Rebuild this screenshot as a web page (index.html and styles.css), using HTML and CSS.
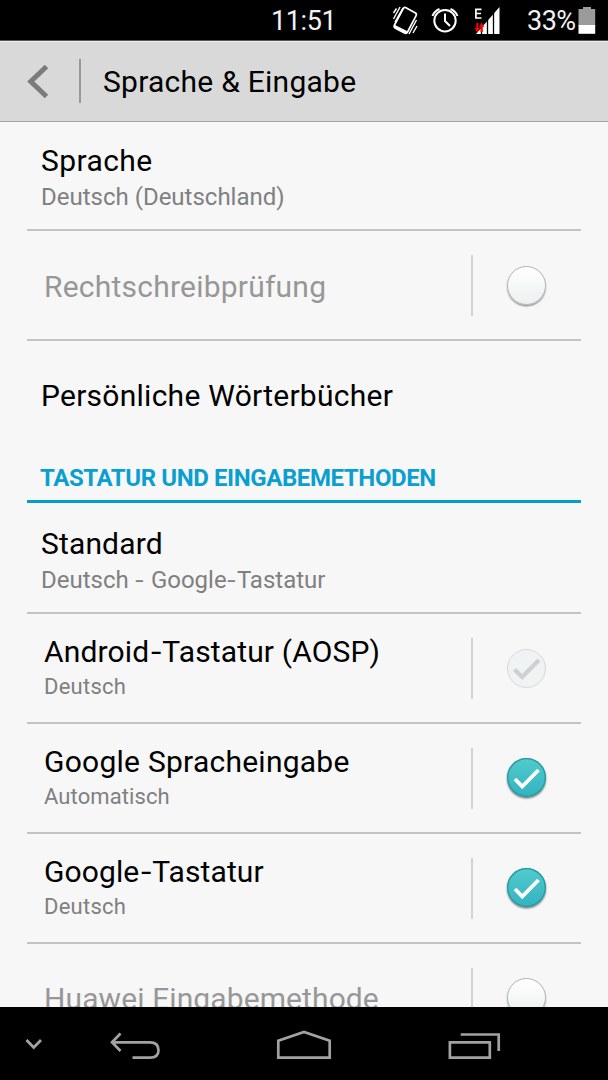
FILE: index.html
```
<!DOCTYPE html>
<html lang="de">
<head>
<meta charset="utf-8">
<title>Sprache &amp; Eingabe</title>
<link rel="stylesheet" href="styles.css">
</head>
<body>
<div class="screen">
  <div class="status">
    <span class="clock">11:51</span>
    <svg class="status-icons" width="112" height="41" viewBox="0 0 112 41">
      <g fill="none" stroke="#fff" stroke-width="1.7">
        <path d="M14.500 7.500L24.500 13Q26 14 25 15.800L16.500 32Q15.500 34 13.500 33L4 28Q2.500 27 3.500 25L12 9Q13 7 14.500 7.500Z"/>
        <path d="M2.500 13L5.500 8.500M2.500 19L9 7M4 22L12 8" stroke-width="1.400"/>
        <path d="M25.500 20L18 34M26 26L22 33" stroke-width="1.400"/>
      </g>
      <path d="M4 25L17 31.500L15.500 34L3 27.500Z" fill="#fff"/>
      <g fill="none" stroke="#fff" stroke-width="2">
        <circle cx="54" cy="20.700" r="10.700"/>
        <path d="M54 13.500V21L59 26"/>
        <path d="M41.500 16Q43.500 11 48.500 9M59.500 9Q64.500 11 66.500 16"/>
      </g>
      <path d="M85 9.300H90.500M85 13.500H90M85 18H90.500M84.900 8.500V18.800" stroke="#fff" stroke-width="1.700" fill="none"/>
      <path d="M85 34L108.500 7V34Z" fill="#fff"/>
      <path d="M90.500 23V34M96.500 17V34M102.500 11V34" stroke="#000" stroke-width="1.300"/>
      <path d="M85.300 23H87.500V28H89L86.300 32.500L83.500 28H85.300ZM88 27L90.500 22.500L93.300 27H91.800V32H89.500V27Z" fill="#f00"/>
    </svg>
    <span class="percent">33%</span>
    <svg class="battery" width="18" height="41" viewBox="0 0 18 41">
      <path d="M.5 9H5V7H13V9H17.200V26H.5Z" fill="#9b9b9b"/>
      <path d="M.5 25H17.200V33.800H.5Z" fill="#fff"/>
    </svg>
  </div>

  <div class="header">
    <svg class="back" width="24" height="38" viewBox="0 0 24 38"><path d="M20.500 3.500L4.800 18.500L20.500 33.500" fill="none" stroke="#7b7b7b" stroke-width="5"/></svg>
    <span class="header-line"></span>
    <h1 class="heading">Sprache &amp; Eingabe</h1>
  </div>

  <div class="list">
    <div class="row plain"><div class="texts"><div class="title t-sprache">Sprache</div><div class="sub">Deutsch (Deutschland)</div></div></div>
    <div class="row single"><div class="texts"><div class="title disabled t-recht">Rechtschreibprüfung</div></div><div class="control"><span class="check empty"></span></div></div>
    <div class="row personal"><div class="title t-pers">Persönliche Wörterbücher</div></div>
    <div class="section"><span class="section-text">TASTATUR UND EINGABEMETHODEN</span></div>
    <div class="row standard"><div class="texts"><div class="title t-std">Standard</div><div class="sub">Deutsch <span class="hyphen">-</span> Google<span class="hyphen">-</span>Tastatur</div></div></div>
    <div class="row method"><div class="texts"><div class="title t-aosp">Android<span class="hyphen">-</span>Tastatur (AOSP)</div><div class="sub small">Deutsch</div></div><div class="control"><span class="check locked"><svg width="39" height="39" viewBox="0 0 39 39"><path d="M7.500 20.500L15.200 28L32 11" fill="none" stroke="#d0d0d0" stroke-width="4.400"/></svg></span></div></div>
    <div class="row method"><div class="texts"><div class="title t-voice">Google Spracheingabe</div><div class="sub small auto">Automatisch</div></div><div class="control"><span class="check on"><svg width="39" height="39" viewBox="0 0 39 39"><path d="M8 21L15.200 28.500L31.500 12" fill="none" stroke="#fff" stroke-width="3.800"/></svg></span></div></div>
    <div class="row method"><div class="texts"><div class="title t-gkey">Google<span class="hyphen">-</span>Tastatur</div><div class="sub small">Deutsch</div></div><div class="control"><span class="check on"><svg width="39" height="39" viewBox="0 0 39 39"><path d="M8 21L15.200 28.500L31.500 12" fill="none" stroke="#fff" stroke-width="3.800"/></svg></span></div></div>
    <div class="row method last"><div class="texts"><div class="title disabled t-huawei">Huawei Eingabemethode</div></div><div class="control"><span class="check empty"></span></div></div>
  </div>

  <svg class="nav" width="608" height="73" viewBox="0 0 608 73">
    <g fill="none" stroke="#a2a2a2" stroke-width="2.700">
      <path d="M26.500 33L33.700 40.500L41 33" stroke-width="2.800"/>
      <path d="M120.500 26.500L112 35.300L120.500 44M112 35.300H150Q158.500 35.300 158.500 43.300Q158.500 50.700 150 50.700H132.500"/>
      <path d="M278.300 50.600V33.700L304 25L329.700 33.700V50.600Z"/>
      <path d="M449.900 35.300H489.800V50.600H449.900ZM460.700 27.500H498.700V44"/>
    </g>
  </svg>
</div>
</body>
</html>
```
FILE: styles.css
```
* { box-sizing: border-box; }
body { margin: 0; font-family: Roboto, "Liberation Sans", sans-serif; }
.screen { width: 608px; height: 1080px; overflow: hidden; display: flex; flex-direction: column; background: #f7f7f7; }
.status { height: 41px; flex: none; display: flex; align-items: center; background: #000; color: #f2f2f2; border-bottom: 1px solid #555; font-size: 27px; line-height: 41px; }
.clock { width: 65px; margin-left: 271px; white-space: nowrap; letter-spacing: -.4px; padding-top: 3px; }
.status-icons { margin-left: 55px; flex: none; }
.percent { width: 50px; margin-left: 24px; white-space: nowrap; padding-top: 3px; letter-spacing: -.5px; }
.battery { margin-left: 1px; flex: none; }
.header { height: 81px; flex: none; display: flex; align-items: center; background: #d9d9d9; border-top: 1px solid #eee; border-bottom: 1px solid #a5a5a5; }
.back { margin-left: 26px; }
.header-line { width: 2px; height: 44px; margin-left: 29px; margin-bottom: 1px; background: #999; }
.heading { margin: 1px 0 0 22px; font-size: 30px; font-weight: 400; line-height: 36px; letter-spacing: .25px; white-space: nowrap; }
.list { height: 885px; flex: none; overflow: hidden; padding: 0 27px; }
.row { display: flex; height: 110px; border-bottom: 2px solid #c4c4c4; }
.plain { height: 109px; padding: 21px 14px 0; }
.single { padding-left: 17px; }
.single .texts { padding-top: 38px; }
.personal { padding: 37px 14px 0; border: 0; }
.standard { height: 111px; padding: 23px 14px 0; }
.method { padding-left: 17px; }
.method .texts { padding-top: 20px; }
.last { border: 0; }
.last .texts { padding-top: 37px; }
.texts { flex: 1; white-space: nowrap; }
.title { font-size: 30px; line-height: 36px; color: #000; white-space: nowrap; }
.t-sprache { letter-spacing: .4px; }
.t-recht { letter-spacing: .22px; }
.t-pers { letter-spacing: .26px; }
.t-std { letter-spacing: .15px; }
.t-aosp { letter-spacing: .15px; }
.t-voice { letter-spacing: .25px; }
.t-gkey { letter-spacing: .1px; }
.t-huawei { letter-spacing: .1px; }
.title.disabled { color: #979797; }
.sub { margin-top: 3px; font-size: 24px; line-height: 30px; color: #808080; }
.sub.small { margin-top: 2px; font-size: 22px; letter-spacing: .25px; }
.sub.auto { letter-spacing: .1px; }
.hyphen { display: inline-block; margin: 0 .075em; transform: scaleX(1.25); }
.section { height: 52px; padding: 12px 13px 0; border-bottom: 3px solid #0a9bcb; color: #0a9fd0; font-size: 24px; line-height: 30px; font-weight: 700; letter-spacing: -.4px; white-space: nowrap; }
.control { width: 110px; height: 61px; margin-top: 24px; border-left: 2px solid #d2d2d2; padding: 11px 0 0 34px; }
.method .control { padding-top: 10px; }
.check { display: block; width: 39px; height: 39px; border-radius: 50%; }
.check svg { display: block; }
.empty { background: linear-gradient(#fff, #edf0f0); border: 1.500px solid #b4b4b4; box-shadow: 0 1.500px 1.500px #999; }
.locked { background: #f0f3f3; border: 1px solid #d8d8d8; margin-top: 1px; }
.locked svg { margin: -1px; }
.on { background: linear-gradient(#53cbcc, #32b2c2); box-shadow: inset 0 0 0 1.300px #259a9c, 0 1.500px 2px #777; }
.nav { display: block; flex: none; background: #000; }
```
